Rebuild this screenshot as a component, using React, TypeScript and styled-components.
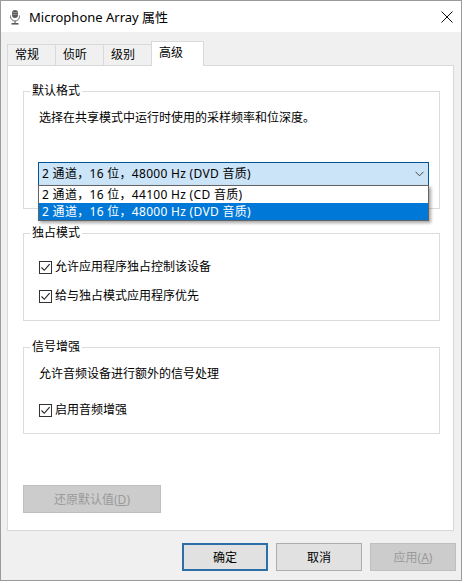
import React from "react";
import styled, { createGlobalStyle, css } from "styled-components";

const GlobalStyle = createGlobalStyle`
  html, body { margin: 0; padding: 0; background: #ffffff; }
  body {
    font-family: "Noto Sans", "Noto Sans CJK SC", sans-serif;
    font-size: 12px;
    color: #000;
  }
`;

const Window = styled.div`
  box-sizing: border-box;
  width: 462px;
  height: 581px;
  border: 1px solid #9b9b9b;
  background: #f0f0f0;
  display: flex;
  flex-direction: column;
`;

const TitleBar = styled.div`
  flex-shrink: 0;
  height: 31px;
  background: #ffffff;
  display: flex;
  align-items: center;
  padding-left: 6px;
`;

const TitleIcon = styled.svg`
  width: 16px;
  height: 16px;
  flex-shrink: 0;
`;

const TitleText = styled.div`
  margin-left: 6px;
  font-size: 13px;
  line-height: 20px;
  color: #000;
`;

const CloseBox = styled.div`
  margin-left: auto;
  width: 28px;
  height: 31px;
  display: flex;
  align-items: center;
  justify-content: center;
`;

const Body = styled.div`
  flex: 1;
  display: flex;
  flex-direction: column;
  padding: 9px 0 0 6px;
`;

const TabRow = styled.div`
  position: relative;
  z-index: 1;
  display: flex;
  align-items: flex-end;
  height: 25px;
  margin-bottom: -1px;
`;

const Tab = styled.div<{ $active?: boolean }>`
  box-sizing: border-box;
  width: 49px;
  height: 22px;
  margin-right: -1px;
  border: 1px solid #d9d9d9;
  background: #f0f0f0;
  padding-left: 7px;
  line-height: 20px;
  white-space: nowrap;
  ${(p) =>
    p.$active &&
    css`
      width: 53px;
      height: 25px;
      border-bottom: none;
      background: #ffffff;
      line-height: 22px;
    `}
`;

const Panel = styled.div`
  box-sizing: border-box;
  width: 447px;
  height: 466px;
  background: #ffffff;
  border: 1px solid #d9d9d9;
  padding: 17px 13px 0 15px;
  display: flex;
  flex-direction: column;
`;

const Group = styled.fieldset<{ $top?: number; $pt: number; $pb: number }>`
  position: relative;
  margin: ${(p) => p.$top ?? 0}px 0 0 0;
  min-width: 0;
  border: 1px solid #dcdcdc;
  padding: ${(p) => p.$pt}px 15px ${(p) => p.$pb}px 15px;
  display: flex;
  flex-direction: column;
  align-items: flex-start;
`;

const Legend = styled.legend`
  margin-left: -9px;
  padding: 0 2px;
  line-height: 16px;
`;

const Text = styled.div`
  line-height: 16px;
  white-space: nowrap;
`;

const Combo = styled.div`
  position: relative;
  box-sizing: border-box;
  width: 391px;
  height: 24px;
  margin: 36px 0 0 -1px;
  border: 1px solid #005499;
  background: #cce4f7;
  display: flex;
  align-items: center;
  padding: 0 4px 0 3px;
  white-space: nowrap;
`;

const ComboValue = styled.span`
  flex: 1;
  line-height: 16px;
  letter-spacing: 0.3px;
`;

const Chevron = styled.svg`
  width: 9px;
  height: 6px;
`;

const DropList = styled.div`
  position: absolute;
  z-index: 5;
  top: 100%;
  left: -1px;
  right: -1px;
  background: #ffffff;
  border: 1px solid #646464;
  box-shadow: 2px 2px 3px rgba(0, 0, 0, 0.35);
`;

const DropItem = styled.div<{ $selected?: boolean }>`
  height: 17px;
  line-height: 17px;
  padding-left: 3px;
  white-space: nowrap;
  letter-spacing: 0.3px;
  ${(p) =>
    p.$selected &&
    css`
      background: #0078d7;
      color: #ffffff;
    `}
`;

const CheckRow = styled.div<{ $mt: number }>`
  display: flex;
  align-items: center;
  gap: 3px;
  margin-top: ${(p) => p.$mt}px;
  line-height: 16px;
  white-space: nowrap;
`;

const CheckBox = styled.span`
  box-sizing: border-box;
  width: 13px;
  height: 13px;
  border: 1px solid #333333;
  background: #ffffff;
  display: flex;
  align-items: center;
  justify-content: center;
`;

const Button = styled.button<{ $default?: boolean; $width?: number }>`
  box-sizing: border-box;
  width: ${(p) => p.$width ?? 86}px;
  height: 28px;
  padding: 0;
  font: inherit;
  color: #000;
  background: #e1e1e1;
  border: 1px solid #adadad;
  ${(p) =>
    p.$default &&
    css`
      border: 2px solid #2c6fa8;
    `}
  &:disabled {
    background: #cccccc;
    border-color: #bfbfbf;
    color: #9a9a9a;
  }
`;

const ResetButton = styled(Button)`
  margin-top: 51px;
`;

const Mnemonic = styled.span`
  text-decoration: underline;
`;

const Footer = styled.div`
  display: flex;
  justify-content: flex-end;
  gap: 8px;
  padding: 12px 5px 0 0;
`;

const Check = () => (
  <CheckBox>
    <svg width="11" height="11" viewBox="0 0 11 11">
      <path d="M1.5 5.5 L4.3 8.3 L9.6 2.2" fill="none" stroke="#222" strokeWidth="1.1" />
    </svg>
  </CheckBox>
);

export default function App() {
  return (
    <>
      <GlobalStyle />
      <Window>
        <TitleBar>
          <TitleIcon viewBox="0 0 16 16">
            <rect x="5" y="1" width="6" height="8" rx="3" fill="#5c5c5c" />
            <path d="M5.5 3.5h5M5.5 5.5h5" stroke="#9a9a9a" strokeWidth="0.8" />
            <path d="M3.5 6.5v1a4.5 4.5 0 0 0 9 0v-1" fill="none" stroke="#6a6a6a" strokeWidth="1" />
            <path d="M8 12v2" stroke="#6a6a6a" strokeWidth="1.2" />
            <rect x="4.5" y="14" width="7" height="1.6" fill="#5c5c5c" />
          </TitleIcon>
          <TitleText>Microphone Array 属性</TitleText>
          <CloseBox>
            <svg width="12" height="12" viewBox="0 0 12 12">
              <path d="M0.5 0.5 L11.5 11.5 M11.5 0.5 L0.5 11.5" stroke="#111" strokeWidth="1" />
            </svg>
          </CloseBox>
        </TitleBar>
        <Body>
          <TabRow>
            <Tab>常规</Tab>
            <Tab>侦听</Tab>
            <Tab>级别</Tab>
            <Tab $active>高级</Tab>
          </TabRow>
          <Panel>
            <Group $pt={11} $pb={22}>
              <Legend>默认格式</Legend>
              <Text>选择在共享模式中运行时使用的采样频率和位深度。</Text>
              <Combo>
                <ComboValue>2 通道，16 位，48000 Hz (DVD 音质)</ComboValue>
                <Chevron viewBox="0 0 9 6">
                  <path d="M0.5 0.8 L4.5 4.8 L8.5 0.8" fill="none" stroke="#444" strokeWidth="1" />
                </Chevron>
                <DropList>
                  <DropItem>2 通道，16 位，44100 Hz (CD 音质)</DropItem>
                  <DropItem $selected>2 通道，16 位，48000 Hz (DVD 音质)</DropItem>
                </DropList>
              </Combo>
            </Group>
            <Group $top={16} $pt={18} $pb={16}>
              <Legend>独占模式</Legend>
              <CheckRow $mt={0}>
                <Check />
                允许应用程序独占控制该设备
              </CheckRow>
              <CheckRow $mt={13}>
                <Check />
                给与独占模式应用程序优先
              </CheckRow>
            </Group>
            <Group $top={18} $pt={11} $pb={15}>
              <Legend>信号增强</Legend>
              <Text>允许音频设备进行额外的信号处理</Text>
              <CheckRow $mt={20}>
                <Check />
                启用音频增强
              </CheckRow>
            </Group>
            <ResetButton $width={138} disabled>
              还原默认值(<Mnemonic>D</Mnemonic>)
            </ResetButton>
          </Panel>
          <Footer>
            <Button $default>确定</Button>
            <Button>取消</Button>
            <Button disabled>
              应用(<Mnemonic>A</Mnemonic>)
            </Button>
          </Footer>
        </Body>
      </Window>
    </>
  );
}
